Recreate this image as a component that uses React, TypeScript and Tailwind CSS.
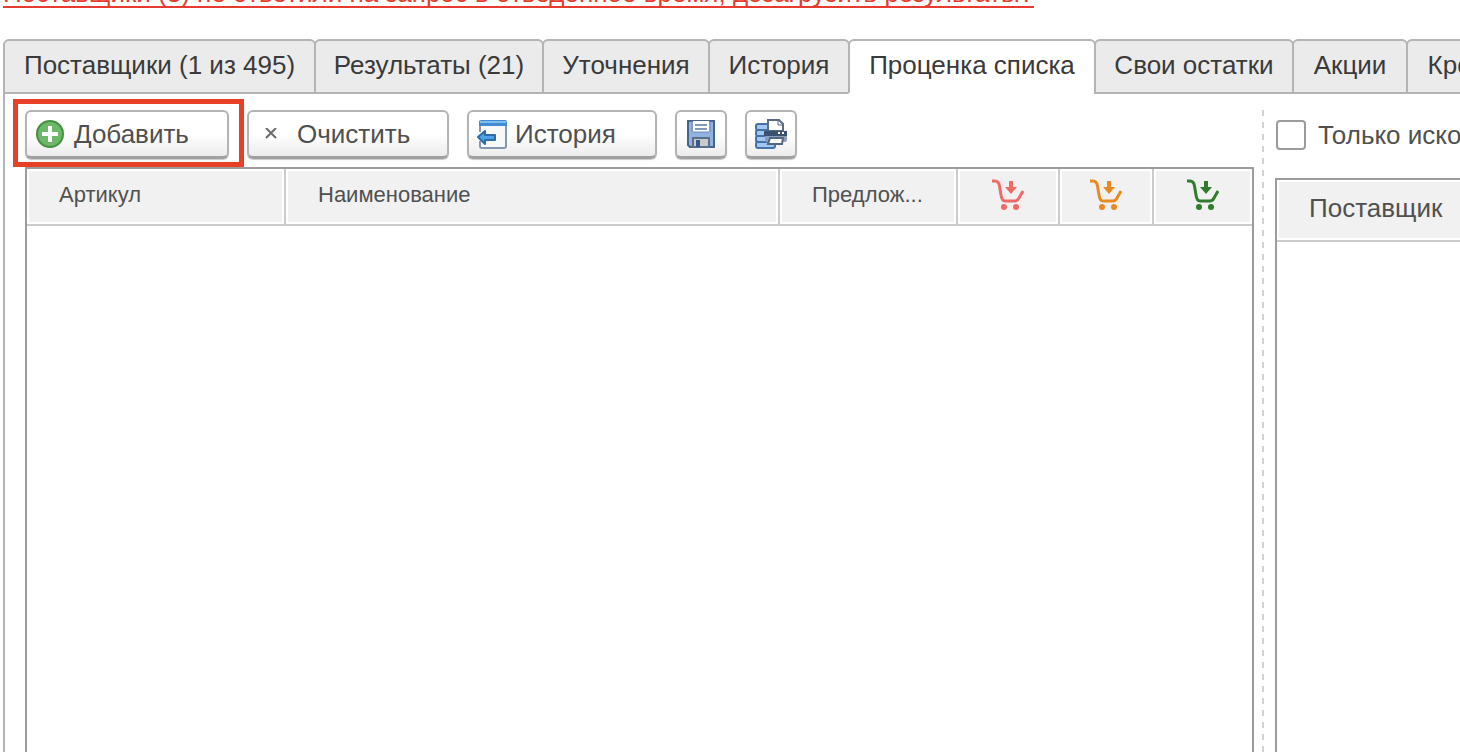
import clsx from "clsx"
import React from "react"

interface TabProps {
  label: string
  className: string
  active?: boolean
}

interface ToolButtonProps {
  className?: string
  title?: string
  children: React.ReactNode
}

const TABS: TabProps[] = [
  { label: "Поставщики (1 из 495)", className: "w-[313px]" },
  { label: "Результаты (21)", className: "w-[230px]" },
  { label: "Уточнения", className: "w-[168px]" },
  { label: "История", className: "w-[142px]" },
  { label: "Проценка списка", className: "w-[248px]", active: true },
  { label: "Свои остатки", className: "w-[200px]" },
  { label: "Акции", className: "w-[116px]" },
  { label: "Кроссы", className: "w-[132px]" },
]

function Tab({ label, className, active }: TabProps) {
  return (
    <button
      type="button"
      role="tab"
      aria-selected={!!active}
      className={clsx(
        "-ml-[2px] h-[55px] shrink-0 border-2 border-[#b4b4b4] pb-1 whitespace-nowrap text-[#3a3a3a]",
        active ? "rounded-t-md border-b-white bg-white" : "rounded-t-md bg-[#ebebeb]",
        className
      )}>
      {label}
    </button>
  )
}

function ToolButton({ className, title, children }: ToolButtonProps) {
  return (
    <button
      type="button"
      title={title}
      className={clsx(
        "flex h-[49px] shrink-0 items-center rounded-md border-2 border-b-3 border-[#b4b4b4] border-b-[#a0a0a0] bg-linear-to-b from-white from-50% to-[#ececec] shadow-[0_1px_1px_#c8c8c8]",
        className
      )}>
      {children}
    </button>
  )
}

function AddIcon() {
  return (
    <svg width="28" height="28" viewBox="0 0 28 28">
      <circle cx="14" cy="14" r="13" fill="#6cb868" stroke="#43923f" strokeWidth="2" />
      <path d="M14 6v16M6 14h16" stroke="#fff" strokeWidth="4" />
    </svg>
  )
}

function ClearIcon() {
  return (
    <svg width="12" height="12" viewBox="0 0 12 12">
      <path d="M1 0l10 10M11 0L1 10" stroke="#6a6a6a" strokeWidth="2" />
    </svg>
  )
}

function HistoryIcon() {
  return (
    <svg width="30" height="30" viewBox="0 0 30 30">
      <path d="M3 6h26v21q0 2-2 2H5q-2 0-2-2z" fill="#f6f8fa" stroke="#8497ad" strokeWidth="2" />
      <path d="M2 7V3q0-2 2-2h24q2 0 2 2v4z" fill="#3f8bd4" />
      <path d="M3 3h26" stroke="#80bdf0" strokeWidth="2" />
      <path d="M0 13h6v9H0z" fill="#f6f8fa" />
      <path d="M1 18l7-6v4h10v5H8v4z" fill="#4fa3e3" stroke="#2b6dab" strokeWidth="2" strokeLinejoin="round" />
    </svg>
  )
}

function SaveIcon() {
  return (
    <svg width="28" height="28" viewBox="0 0 28 28">
      <path d="M1 1h26v26H3l-2-2z" fill="#8fb2e0" stroke="#45648f" strokeWidth="2" />
      <path d="M6 1h16v11H6z" fill="#fff" />
      <path d="M6 12h16M5 1v11M23 1v11" stroke="#6c8bb6" />
      <path d="M8 5h12M8 9h12" stroke="#7f99b8" strokeWidth="2" />
      <path d="M6 18h16v9H6z" fill="#c9cbc8" stroke="#5b6f8c" strokeWidth="2" />
      <path d="M9 20h4v7H9z" fill="#37588a" />
    </svg>
  )
}

function PrintIcon() {
  return (
    <svg width="32" height="32" viewBox="0 0 32 32">
      <g fill="#a3c7f1" stroke="#4573a8" strokeWidth="2">
        <rect x="1" y="6" width="17" height="6" rx="2" />
        <rect x="1" y="12" width="17" height="6" rx="2" />
        <rect x="1" y="18" width="17" height="6" rx="2" />
        <rect x="1" y="24" width="19" height="6" rx="2" />
      </g>
      <path d="M13 13V2h11l4 4v7z" fill="#fff" stroke="#5a6c84" strokeWidth="2" />
      <path d="M23 2v5h5" fill="none" stroke="#5a6c84" />
      <path d="M10 15q0-2 2-2h18q2 0 2 2v7q0 2-2 2H12q-2 0-2-2z" fill="#8ba0b8" />
      <path d="M9 13h23v5H9z" fill="#3a526f" />
      <path d="M23 14h2v2h-2zM27 14h2v2h-2z" fill="#fff" />
      <path d="M15 20h13l-1 6H13z" fill="#fff" stroke="#53677f" strokeWidth="2" />
    </svg>
  )
}

function CartIcon({ className }: { className: string }) {
  return (
    <svg className={clsx("inline-block", className)} width="32" height="32" viewBox="0 0 32 32">
      <path
        d="M0 2h3c3 0 4 2 4.500 5L9 16c.6 4 2 6 4 6h10c2 0 3-1 4-3l4-7"
        fill="none"
        stroke="currentColor"
        strokeWidth="3"
      />
      <path d="M17 2h4v6h4l-6 7-6-7h4z" fill="currentColor" />
      <circle cx="12" cy="28" r="3" fill="currentColor" />
      <circle cx="24" cy="28" r="3" fill="currentColor" />
    </svg>
  )
}

const headCell =
  "h-[57px] overflow-hidden border-r-2 border-b-2 border-[#cbcbcb] bg-[#f1f1f1] pb-1 font-normal shadow-[inset_0_0_0_2px_#fff] last:border-r-0"

function App() {
  return (
    <div className="flex h-screen flex-col overflow-hidden bg-white pl-[3px] font-['Liberation_Sans',Arial,sans-serif] text-[26px] leading-8 text-[#505050]">
      <div className="flex h-2 shrink-0 items-end overflow-hidden">
        <a
          href="#reload"
          className="shrink-0 border-b-2 border-[#e63b2e] leading-[26px] whitespace-nowrap text-[#e63b2e]">
          Поставщики (3) не ответили на запрос в отведенное время, дозагрузить результаты?
        </a>
      </div>

      <div role="tablist" className="mt-[31px] flex shrink-0 pl-[2px]">
        {TABS.map((tab) => (
          <Tab key={tab.label} {...tab} />
        ))}
      </div>

      <div className="flex min-h-0 flex-1 border-l-2 border-[#b4b4b4] pt-4 pl-5">
        <div className="flex min-w-0 flex-1 flex-col">
          <div className="flex gap-[18px]">
            <div className="relative">
              <ToolButton className="w-[204px] gap-[10px] pl-[9px]">
                <AddIcon />
                Добавить
              </ToolButton>
              <div className="pointer-events-none absolute -top-[11px] -right-[15px] -bottom-2 -left-3 border-[5px] border-[#e84026]" />
            </div>
            <ToolButton className="w-[202px] gap-5 pl-4">
              <ClearIcon />
              Очистить
            </ToolButton>
            <ToolButton className="w-[190px] gap-2 pl-2">
              <HistoryIcon />
              История
            </ToolButton>
            <ToolButton className="w-[52px] justify-center" title="Сохранить">
              <SaveIcon />
            </ToolButton>
            <ToolButton className="w-[52px] justify-center" title="Печать">
              <PrintIcon />
            </ToolButton>
          </div>

          <div className="mt-2 flex-1 border-2 border-b-0 border-[#9c9c9c]">
            <table className="w-full table-fixed border-separate border-spacing-0 text-[22px]">
              <thead>
                <tr>
                  <th className={clsx(headCell, "w-[259px] pl-8 text-left")}>Артикул</th>
                  <th className={clsx(headCell, "pl-8 text-left")}>Наименование</th>
                  <th className={clsx(headCell, "w-[178px] pl-8 text-left")}>Предлож...</th>
                  <th className={clsx(headCell, "w-[102px]")}>
                    <CartIcon className="text-[#f06a66]" />
                  </th>
                  <th className={clsx(headCell, "w-[94px]")}>
                    <CartIcon className="text-[#e88a22]" />
                  </th>
                  <th className={clsx(headCell, "w-[98px]")}>
                    <CartIcon className="text-[#2f7d2c]" />
                  </th>
                </tr>
              </thead>
            </table>
          </div>
        </div>

        <div className="mr-[11px] ml-2 w-[2px] shrink-0 bg-[repeating-linear-gradient(to_bottom,#d2d2d2_0px,#d2d2d2_6px,transparent_6px,transparent_12px)]" />

        <div className="flex w-[185px] shrink-0 flex-col overflow-hidden">
          <label className="flex h-[50px] shrink-0 items-center gap-3 whitespace-nowrap">
            <input
              type="checkbox"
              className="ml-px size-[30px] shrink-0 appearance-none rounded border-2 border-[#9c9c9c] bg-white"
            />
            Только искомый
          </label>
          <div className="mt-[18px] flex-1 border-t-2 border-l-2 border-[#9c9c9c]">
            <table className="w-full border-separate border-spacing-0">
              <thead>
                <tr>
                  <th className="h-[62px] border-b-2 border-[#cbcbcb] bg-[#f1f1f1] pb-1 pl-8 text-left font-normal shadow-[inset_2px_2px_0_#fff,inset_0_-2px_0_#fff]">
                    Поставщик
                  </th>
                </tr>
              </thead>
            </table>
          </div>
        </div>
      </div>
    </div>
  )
}

export default App
